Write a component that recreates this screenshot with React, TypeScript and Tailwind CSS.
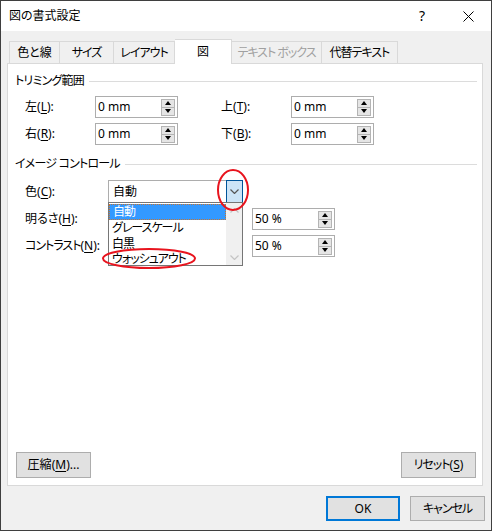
import React from "react";

// katakana in the dialog font is narrower than Noto's, so tighten those strings
const kana = "tracking-[-1px]";

const tabs = [
  { label: "色と線", w: "w-[51px]" },
  { label: "サイズ", w: "w-[54px]", k: true },
  { label: "レイアウト", w: "w-[61px]", k: true },
  { label: "図", w: "w-[57px]", active: true },
  { label: "テキスト ボックス", w: "w-[90px]", disabled: true, k: true },
  { label: "代替テキスト", w: "w-[76px]", k: true },
];

function Key({ k }: { k: string }) {
  return (
    <span className="tracking-normal">
      (<span className="underline underline-offset-2">{k}</span>)
    </span>
  );
}

function SpinArrows() {
  return (
    <div className="flex flex-col w-[14px] h-[17px] mr-[2px]">
      <div className="flex-1 flex items-center justify-center bg-[#e5e5e5] border border-[#b4b4b4]">
        <svg width="6" height="4" viewBox="0 0 6 4">
          <path d="M0 4 L3 0 L6 4 Z" fill="#000" />
        </svg>
      </div>
      <div className="flex-1 flex items-center justify-center bg-[#e5e5e5] border border-t-0 border-[#b4b4b4]">
        <svg width="6" height="4" viewBox="0 0 6 4">
          <path d="M0 0 L3 4 L6 0 Z" fill="#000" />
        </svg>
      </div>
    </div>
  );
}

function Spin({ value }: { value: string }) {
  return (
    <div className="w-[83px] h-[22px] border border-[#adadad] bg-white flex items-center">
      <span className="flex-1 pl-[2px]">{value}</span>
      <SpinArrows />
    </div>
  );
}

function GroupHead({ title }: { title: string }) {
  return (
    <div className="flex items-center h-[16px]">
      <span className="tracking-[-0.8px]">{title}</span>
      <div className="flex-1 h-px bg-[#dcdcdc] ml-[5px]" />
    </div>
  );
}

function Chevron({ up, color }: { up?: boolean; color: string }) {
  return (
    <svg width="9" height="5" viewBox="0 0 9 5">
      <path d={up ? "M0.5 4.5 L4.5 0.5 L8.5 4.5" : "M0.5 0.5 L4.5 4.5 L8.5 0.5"} fill="none" stroke={color} strokeWidth="1.2" />
    </svg>
  );
}

export default function App() {
  return (
    <div className="relative w-[492px] h-[531px] overflow-hidden bg-[#f0f0f0] border border-[#3f3f3f] flex flex-col text-[12px] leading-[16px] text-black font-['Noto_Sans','Noto_Sans_CJK_JP',sans-serif] [font-feature-settings:'palt']">
      {/* title bar */}
      <div className="h-[30px] bg-white flex items-center shrink-0">
        <span className="pl-[8px] text-[12px]">図の書式設定</span>
        <div className="ml-auto flex h-full">
          <div className="w-[46px] flex items-center justify-center text-[14px]">?</div>
          <div className="w-[46px] flex items-center justify-center">
            <svg width="11" height="11" viewBox="0 0 11 11">
              <path d="M0.5 0.5 L10.5 10.5 M10.5 0.5 L0.5 10.5" stroke="#000" strokeWidth="1" />
            </svg>
          </div>
        </div>
      </div>

      {/* tabs */}
      <div className="flex items-end ml-[8px] pt-[8px] h-[32px] shrink-0">
        {tabs.map((t, i) => (
          <div
            key={t.label}
            className={`${t.w} flex items-center justify-center border-t border-r border-[#d9d9d9] ${
              i === 0 ? "border-l" : ""
            } ${t.active ? "h-[25px] bg-white relative z-10 -mb-px" : "h-[22px] bg-[#f0f0f0]"} ${
              t.disabled ? "text-[#a0a0a0]" : ""
            } ${t.k ? kana : ""}`}
          >
            {t.label}
          </div>
        ))}
      </div>

      {/* panel */}
      <div className="ml-[6px] w-[476px] h-[423px] shrink-0 bg-white border border-[#d9d9d9] flex flex-col pl-[7px] pr-[5px]">
        <div className="mt-[9px]">
          <GroupHead title="トリミング範囲" />
        </div>
        <div className="mt-[7px] flex items-center pl-[10px]">
          <span className="w-[70px]">左<Key k="L" />:</span>
          <Spin value="0 mm" />
          <span className="w-[43px]" />
          <span className="w-[70px]">上<Key k="T" />:</span>
          <Spin value="0 mm" />
        </div>
        <div className="mt-[5px] flex items-center pl-[10px]">
          <span className="w-[70px]">右<Key k="R" />:</span>
          <Spin value="0 mm" />
          <span className="w-[43px]" />
          <span className="w-[70px]">下<Key k="B" />:</span>
          <Spin value="0 mm" />
        </div>

        <div className="mt-[11px]">
          <GroupHead title="イメージ コントロール" />
        </div>
        <div className="mt-[8px] flex items-center pl-[10px]">
          <span className="w-[83px]">色<Key k="C" />:</span>
          <div className="relative w-[135px] h-[23px] flex">
            <div className="flex-1 flex items-center pl-[4px] bg-white border-l border-t border-b border-[#adadad]">自動</div>
            <div className="w-[17px] h-full flex items-center justify-center bg-[#cce4f7] border border-[#005499]">
              <Chevron color="#555" />
            </div>
            {/* open list */}
            <div className="absolute left-0 top-[22px] w-[135px] h-[64px] z-20 bg-white border border-[#767676] flex overflow-hidden">
              <div className={`flex-1 flex flex-col pt-px ${kana}`}>
                <div className="h-[16px] flex items-center pl-[3px] bg-[#3399ff] text-white border border-dotted border-[#c8742f]">自動</div>
                <div className="h-[16px] flex items-center pl-[3px]">グレースケール</div>
                <div className="h-[16px] flex items-center pl-[3px]">白黒</div>
                <div className="h-[14px] leading-[14px] flex items-center pl-[3px]">ウォッシュアウト</div>
              </div>
              <div className="w-[16px] h-full bg-[#f0f0f0] flex flex-col items-center justify-between py-[5px]">
                <Chevron up color="#c4c4c4" />
                <Chevron color="#c4c4c4" />
              </div>
            </div>
          </div>
        </div>
        <div className="mt-[5px] flex items-center pl-[10px]">
          <div className="w-[227px]">
            <span>明るさ<Key k="H" />:</span>
          </div>
          <Spin value="50 %" />
        </div>
        <div className="mt-[5px] flex items-center pl-[10px]">
          <div className="w-[227px]">
            <span className={kana}>コントラスト<Key k="N" />:</span>
          </div>
          <Spin value="50 %" />
        </div>

        <div className="mt-auto mb-[7px] flex justify-between ml-px mr-px">
          <div className="w-[75px] h-[26px] flex items-center justify-center bg-[#e1e1e1] border border-[#adadad]">
            圧縮<Key k="M" />...
          </div>
          <div className={`w-[75px] h-[26px] flex items-center justify-center bg-[#e1e1e1] border border-[#adadad] ${kana}`}>
            リセット<Key k="S" />
          </div>
        </div>
      </div>

      {/* footer */}
      <div className="flex justify-end gap-[10px] pt-[10px] pr-[6px]">
        <div className="w-[74px] h-[25px] flex items-center justify-center bg-[#e1e1e1] border-2 border-[#0078d7]">OK</div>
        <div className={`w-[75px] h-[25px] flex items-center justify-center bg-[#e1e1e1] border border-[#adadad] ${kana}`}>キャンセル</div>
      </div>

      {/* red annotation ellipses */}
      <svg className="absolute left-[215px] top-[167px] z-30" width="34" height="44" viewBox="0 0 34 44">
        <ellipse cx="17" cy="22" rx="15" ry="20" fill="none" stroke="#e8141e" strokeWidth="2" />
      </svg>
      <svg className="absolute left-[100px] top-[246px] z-30" width="96" height="23" viewBox="0 0 96 23">
        <ellipse cx="48" cy="11.5" rx="46" ry="9.5" fill="none" stroke="#e8141e" strokeWidth="2" />
      </svg>
    </div>
  );
}
